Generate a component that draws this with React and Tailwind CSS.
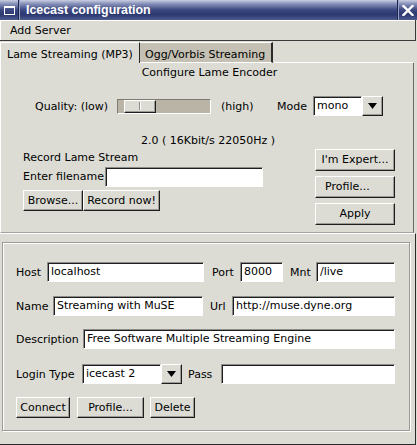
import React from 'react';

const btn =
  "flex items-center justify-center bg-[#dcdcd5] border border-t-white border-l-white border-r-[#1e1e1e] border-b-[#1e1e1e] shadow-[inset_-1px_-1px_0_#9c9c96]";
const sunken =
  "bg-white border border-t-[#8c8c88] border-l-[#8c8c88] border-r-white border-b-white shadow-[inset_1px_1px_0_#1e1e1e]";

function Button({ w, h = 'h-[21px]', className = '', children }) {
  return <div className={`${btn} ${w} ${h} ${className} pt-px`}>{children}</div>;
}

function Input({ w, value = '', className = '' }) {
  return (
    <div className={`${sunken} ${w} h-[20px] flex items-center pl-[3px] pt-px whitespace-nowrap overflow-hidden ${className}`}>
      {value}
    </div>
  );
}

function Choice({ w, value }) {
  return (
    <div className={`${w} h-[20px] flex`}>
      <div className={`${sunken} flex-1 flex items-center pl-[3px] pt-px`}>{value}</div>
      <div className={`${btn} w-[21px] h-[20px]`}>
        <svg width="9" height="6" viewBox="0 0 9 6">
          <path d="M0 0 H9 L4.5 6 Z" fill="#000" />
        </svg>
      </div>
    </div>
  );
}

function Label({ w, className = '', children }) {
  return <span className={`${w} shrink-0 whitespace-nowrap pt-[2px] ${className}`}>{children}</span>;
}

export default function App() {
  return (
    <div className="w-[417px] h-[445px] overflow-hidden bg-[#dcdcd5] text-black text-[11px] font-['DejaVu_Sans',sans-serif] flex flex-col">
      {/* title bar */}
      <div className="h-[20px] shrink-0 flex items-stretch bg-[linear-gradient(to_bottom,#c9cee2_0%,#8a94bc_18%,#3e4b82_48%,#2b3871_72%,#4d5a8c_100%)]">
        <div className="w-[19px] flex items-center justify-center border-r border-r-[#1d2550]">
          <div className="w-[11px] h-[9px] border border-white border-t-2" />
        </div>
        <div className="w-px bg-[#9aa3c6]" />
        <span className="ml-[6px] flex items-center text-white font-bold text-[12.4px] font-['Liberation_Sans',sans-serif]">
          Icecast configuration
        </span>
        <div className="flex-1" />
        <div className="w-px bg-[#1d2550]" />
        <div className="w-[19px] flex items-center justify-center border-l border-l-[#9aa3c6]">
          <svg width="12" height="11" viewBox="0 0 12 11">
            <path d="M1.5 1 L10.5 10 M10.5 1 L1.5 10" stroke="#fff" strokeWidth="2.4" strokeLinecap="square" />
          </svg>
        </div>
      </div>

      {/* menu bar */}
      <div className="h-[21px] w-[416px] shrink-0 flex items-center pl-[10px] pt-[3px] border-r border-b border-r-[#3a3a3a] border-b-[#3a3a3a] shadow-[inset_1px_1px_0_#fff]">
        Add Server
      </div>

      {/* tabs */}
      <div className="w-[414px] mt-[1px] flex flex-col">
        <div className="h-[21px] flex items-stretch">
          <div className="w-[140px] flex items-center pl-[6px] pt-[5px] border-t border-l border-t-white border-l-white border-r border-r-[#2a2a2a]">
            Lame Streaming (MP3)
          </div>
          <div className="w-[133px] flex items-center pl-[5px] pt-[5px] bg-[#c4c0b3] border-t border-t-white border-r-2 border-r-[#2a2a2a] border-b border-b-white">
            Ogg/Vorbis Streaming
          </div>
        </div>
        <div className="h-[170px] flex flex-col border-l border-l-white border-r border-r-[#6a6a66] border-b border-b-[#a4a49e] relative">
          <div className="absolute top-[-1px] left-[273px] right-0 h-px bg-white" />
          <div className="mt-[3px] h-[13px] leading-[13px] text-center pl-[5px]">Configure Lame Encoder</div>

          <div className="mt-[17px] h-[20px] flex items-center">
            <Label w="w-[82px]" className="ml-[34px]">Quality: (low)</Label>
            <div className="w-[94px] h-[15px] bg-[#b9b4a5] border border-t-[#7c7a72] border-l-[#7c7a72] border-r-white border-b-white flex items-center">
              <div className={`${btn} ml-[6px] w-[32px] h-[13px]`}>
                <div className="w-[2px] h-[8px] border-l border-l-[#8c8c88] border-r border-r-white" />
              </div>
            </div>
            <Label w="w-[56px]" className="ml-[10px]">(high)</Label>
            <Label w="w-[36px]">Mode</Label>
            <Choice w="w-[70px]" value="mono" />
          </div>

          <div className="mt-[18px] h-[13px] leading-[13px] text-center pl-[2px]">2.0 ( 16Kbit/s 22050Hz )</div>

          <div className="flex items-start">
            <div className="ml-[22px] w-[240px] flex flex-col">
              <div className="mt-[4px] h-[13px] leading-[13px]">Record Lame Stream</div>
              <div className="mt-[3px] h-[19px] flex items-center">
                <Label w="w-[82px]">Enter filename</Label>
                <Input w="w-[158px] h-[19px]" />
              </div>
              <div className="mt-[4px] flex">
                <Button w="w-[60px]">Browse...</Button>
                <Button w="w-[77px]">Record now!</Button>
              </div>
            </div>
            <div className="ml-[52px] mt-[2px] w-[80px] flex flex-col gap-[5px]">
              <Button w="w-[80px]" h="h-[22px]">I'm Expert...</Button>
              <Button w="w-[80px]" h="h-[22px]" className="justify-start pl-[9px]">Profile...</Button>
              <Button w="w-[80px]" h="h-[22px]">Apply</Button>
            </div>
          </div>
        </div>
      </div>

      {/* server section */}
      <div className="w-[416px] flex-1 flex flex-col border-t border-t-white border-r border-b border-r-[#2a2a2a] border-b-[#2a2a2a]">
        <div className="ml-[2px] mt-[8px] w-[408px] h-[189px] border border-[#9c9c96] shadow-[inset_1px_1px_0_#fff,1px_1px_0_#fff] flex flex-col pl-[13px]">
          <div className="mt-[19px] h-[20px] flex items-center">
            <Label w="w-[31px]">Host</Label>
            <Input w="w-[157px]" value="localhost" />
            <Label w="w-[28px]" className="ml-[8px]">Port</Label>
            <Input w="w-[43px]" value="8000" />
            <Label w="w-[26px]" className="ml-[7px]">Mnt</Label>
            <Input w="w-[79px]" value="/live" />
          </div>
          <div className="mt-[14px] h-[20px] flex items-center">
            <Label w="w-[37px]">Name</Label>
            <Input w="w-[150px]" value="Streaming with MuSE" />
            <Label w="w-[22px]" className="ml-[7px]">Url</Label>
            <Input w="w-[163px]" value="http://muse.dyne.org" />
          </div>
          <div className="mt-[13px] h-[20px] flex items-center">
            <Label w="w-[67px]">Description</Label>
            <Input w="w-[312px]" value="Free Software Multiple Streaming Engine" />
          </div>
          <div className="mt-[15px] h-[20px] flex items-center">
            <Label w="w-[66px]">Login Type</Label>
            <Choice w="w-[100px]" value="icecast 2" />
            <Label w="w-[33px]" className="ml-[6px]">Pass</Label>
            <Input w="w-[174px]" />
          </div>
          <div className="mt-[13px] flex">
            <Button w="w-[54px]">Connect</Button>
            <Button w="w-[67px]" className="ml-[7px]">Profile...</Button>
            <Button w="w-[45px]" className="ml-[6px]">Delete</Button>
          </div>
        </div>
      </div>
    </div>
  );
}
